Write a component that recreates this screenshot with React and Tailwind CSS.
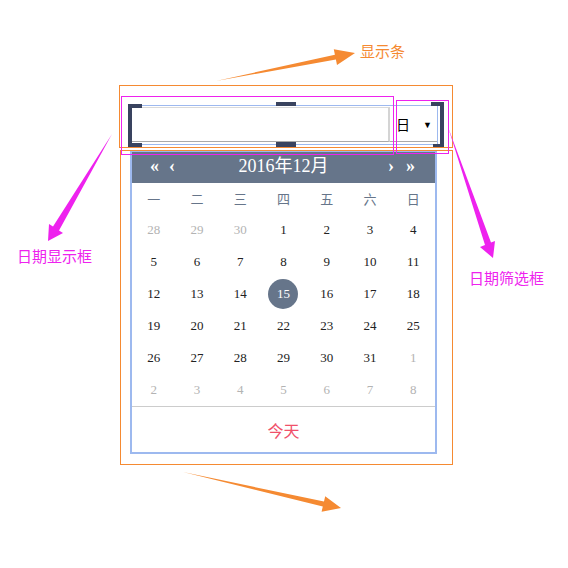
import React from "react";

const cells = Array.from({ length: 42 }, (_, i) => {
  if (i < 3) return { d: 28 + i, cur: false };
  const n = i - 2;
  if (n <= 31) return { d: n, cur: true };
  return { d: n - 31, cur: false };
});
const weekdays = ["一", "二", "三", "四", "五", "六", "日"];

const serif = { fontFamily: '"Liberation Serif","Noto Sans CJK SC",serif' };
const cjk = { fontFamily: '"Noto Sans CJK SC","Liberation Sans",sans-serif' };

export default function App() {
  return (
    <div className="relative w-[568px] h-[568px] bg-white overflow-hidden">
      {/* widget */}
      <div className="flex flex-col pt-[105px] pl-[130px]">
        {/* display bar */}
        <div className="relative w-[308px] h-[40px] border border-[#9db9ef] bg-white flex">
          <div className="flex-1 border-t border-b border-t-[#dadada] border-b-[#a9a9a9] border-r-2 border-r-[#d4d4d4] mt-px mb-[2px]"></div>
          <div className="w-[47px] flex items-center justify-between pl-[6px] pr-[5px] border-b border-[#a9a9a9] mb-[2px] mt-px">
            <span className="text-[14px] leading-none text-black" style={cjk}>日</span>
            <span className="text-[9px] leading-none text-black">▼</span>
          </div>
          {/* crop handles */}
          <div className="absolute left-[-3px] top-[-2px] w-[4px] h-[43px] bg-[#39435f]"></div>
          <div className="absolute left-[-2px] top-[-2px] w-[13px] h-[4px] bg-[#39435f]"></div>
          <div className="absolute left-[-2px] top-[37px] w-[13px] h-[4px] bg-[#39435f]"></div>
          <div className="absolute left-[309px] top-[-4px] w-[4px] h-[46px] bg-[#39435f]"></div>
          <div className="absolute left-[300px] top-[-4px] w-[13px] h-[4px] bg-[#39435f]"></div>
          <div className="absolute left-[302px] top-[38px] w-[11px] h-[4px] bg-[#39435f]"></div>
          <div className="absolute left-[145px] top-[-4px] w-[20px] h-[4px] bg-[#39435f]"></div>
          <div className="absolute left-[145px] top-[36px] w-[20px] h-[5px] bg-[#39435f]"></div>
        </div>

        {/* calendar */}
        <div className="mt-[5px] w-[307px] h-[304px] border-2 border-[#9db9ef] bg-white flex flex-col">
          <div className="h-[31px] pb-[4px] bg-[#66758a] text-white grid grid-cols-[1fr_auto_1fr] items-center">
            <div className="flex items-center gap-[10px] pl-[18px] text-[18px] font-bold leading-none" style={serif}>
              <span>«</span>
              <span>‹</span>
            </div>
            <div className="text-[18px] leading-none" style={serif}>2016年12月</div>
            <div className="flex items-center justify-end gap-[12px] pr-[20px] text-[18px] font-bold leading-none" style={serif}>
              <span>›</span>
              <span>»</span>
            </div>
          </div>
          <div className="grid grid-cols-7 h-[31px] items-center">
            {weekdays.map((w) => (
              <div key={w} className="text-center text-[13px] leading-none text-[#66758a]" style={cjk}>
                {w}
              </div>
            ))}
          </div>
          <div className="grid grid-cols-7 grid-rows-6">
            {cells.map((c, i) => (
              <div key={i} className="h-[32px] pb-px flex items-center justify-center">
                {c.cur && c.d === 15 ? (
                  <span className="w-[30px] h-[30px] rounded-full bg-[#66758a] text-white flex items-center justify-center text-[13px] leading-none" style={serif}>
                    15
                  </span>
                ) : (
                  <span className={"text-[13px] leading-none " + (c.cur ? "text-[#222]" : "text-[#b3b3b3]")} style={serif}>
                    {c.d}
                  </span>
                )}
              </div>
            ))}
          </div>
          <div className="h-px bg-[#cccccc]"></div>
          <div className="flex-1 flex items-center justify-center">
            <span className="text-[16px] leading-none text-[#f0506a]" style={cjk}>今天</span>
          </div>
        </div>
      </div>

      {/* annotation rectangles */}
      <div className="absolute left-[119px] top-[85px] w-[334px] h-[63px] border border-[#f58a32]"></div>
      <div className="absolute left-[120px] top-[150px] w-[333px] h-[315px] border border-[#f58a32]"></div>
      <div className="absolute left-[121px] top-[96px] w-[273px] h-[59px] border border-[#ee22ee]"></div>
      <div className="absolute left-[396px] top-[100px] w-[53px] h-[54px] border border-[#ee22ee]"></div>

      {/* arrows */}
      <svg className="absolute left-0 top-0" width="568" height="568" viewBox="0 0 568 568">
        <polygon points="216,81 335.9,59.5 337,65 355,53 333.8,49.3 334.9,54.7" fill="#f58a32" />
        <polygon points="183,472 324,501.6 325.2,496.2 341,508 321.6,511.8 322.8,506.4" fill="#f58a32" />
        <polygon points="112,134 59,230.5 63,233 48,241 49,224 53,226.5" fill="#ee22ee" />
        <polygon points="448,127 491,242.6 495,241 493,258 480,247 485,245" fill="#ee22ee" />
      </svg>

      {/* labels */}
      <div className="absolute left-[360px] top-[42px] text-[15px] leading-[18px] text-[#f58a32]" style={cjk}>显示条</div>
      <div className="absolute left-[17px] top-[247px] text-[15px] leading-[18px] text-[#ee22ee]" style={cjk}>日期显示框</div>
      <div className="absolute left-[469px] top-[269px] text-[15px] leading-[18px] text-[#ee22ee]" style={cjk}>日期筛选框</div>
    </div>
  );
}
